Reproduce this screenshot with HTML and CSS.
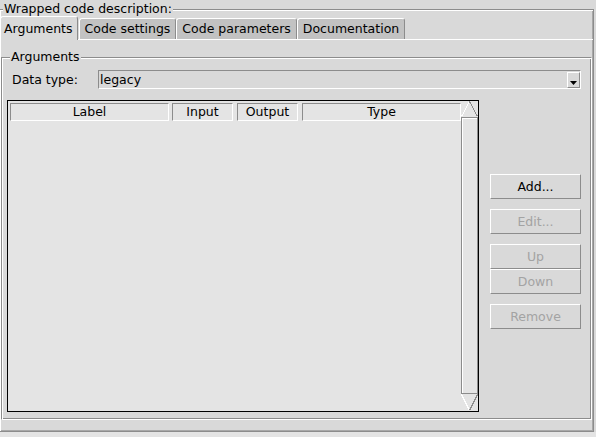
FILE: index.html
```html
<!DOCTYPE html>
<html>
<head>
<meta charset="utf-8">
<title>Wrapped code description</title>
<link rel="stylesheet" href="styles.css">
</head>
<body>
<fieldset class="group outer">
  <legend class="group-title">Wrapped code description:</legend>
  <div class="tabs">
    <div class="tab tab-active">Arguments</div>
    <div class="tab tab-first">Code settings</div>
    <div class="tab">Code parameters</div>
    <div class="tab">Documentation</div>
  </div>
  <div class="panel">
    <fieldset class="group inner">
      <legend class="group-title">Arguments</legend>
      <div class="type-row">
        <span class="type-label">Data type:</span>
        <div class="combo">
          <span class="combo-value">legacy</span>
          <span class="combo-btn"><svg width="7" height="4" viewBox="0 0 7 4"><polygon points="0,0 7,0 3.5,4" fill="#000"/></svg></span>
        </div>
      </div>
      <div class="main">
        <div class="table">
          <div class="grid">
            <div class="header">
              <div class="th c-label">Label</div>
              <div class="th c-input">Input</div>
              <div class="th c-output">Output</div>
              <div class="th c-type">Type</div>
            </div>
          </div>
          <div class="vscroll">
            <svg class="arrow" width="17" height="16" viewBox="0 0 17 16" shape-rendering="crispEdges">
              <line x1="0.5" y1="15.5" x2="8.5" y2="0.5" stroke="#ffffff" stroke-width="1"/>
              <line x1="8.5" y1="0.5" x2="16.5" y2="15.5" stroke="#8c8c8c" stroke-width="1"/>
            </svg>
            <div class="thumb"></div>
            <svg class="arrow" width="17" height="17" viewBox="0 0 17 17" shape-rendering="crispEdges">
              <line x1="0.5" y1="0.5" x2="8.5" y2="16.5" stroke="#ffffff" stroke-width="1"/>
              <line x1="16.5" y1="0.5" x2="8.5" y2="16.5" stroke="#8c8c8c" stroke-width="1"/>
            </svg>
          </div>
        </div>
        <div class="buttons">
          <div class="btn">Add...</div>
          <div class="btn btn-disabled btn-spaced">Edit...</div>
          <div class="btn btn-disabled btn-spaced">Up</div>
          <div class="btn btn-disabled">Down</div>
          <div class="btn btn-disabled btn-spaced">Remove</div>
        </div>
      </div>
    </fieldset>
  </div>
</fieldset>
<div class="status"></div>
</body>
</html>
```

FILE: styles.css
```css
html, body {
  margin: 0;
  padding: 0;
}

body {
  width: 596px;
  height: 437px;
  overflow: hidden;
  background: #d9d9d9;
  font-family: "DejaVu Sans", sans-serif;
  font-size: 12.5px;
  color: #000;
}

.group {
  margin: 0;
  padding: 0;
  min-width: 0;
  box-sizing: border-box;
  border: 1px solid #8c8c8c;
}

.group-title {
  margin-left: 3px;
  padding: 0 1px 2px;
  line-height: 9px;
  background: #d9d9d9;
  white-space: nowrap;
}

.outer {
  margin: 4px 0 0 -1px;
  width: 595px;
  border-color: #8c8c8c;
  box-shadow: inset 1px 1px 0 #fff, inset -1px -1px 0 #a8a8a8;
}

.tabs {
  display: flex;
  align-items: flex-end;
  height: 23px;
  margin-top: 1px;
}

.tab {
  box-sizing: border-box;
  height: 21px;
  padding: 2px 5px 0 5px;
  line-height: 15px;
  background: #c2c2c2;
  border-top: 1px solid #fff;
  border-left: 1px solid #fff;
  border-right: 1px solid #8c8c8c;
  border-radius: 3px 3px 0 0;
  white-space: nowrap;
}

.tab-first {
  margin-left: 1px;
}

.tab-active {
  position: relative;
  z-index: 1;
  height: 24px;
  padding: 4px 4px 0 3px;
  margin-bottom: -1px;
  background: #d9d9d9;
}

.panel {
  border-top: 1px solid #fff;
  padding: 12px 1px 11px;
}

.inner {
  border-color: #8c8c8c #fff #fff #8c8c8c;
  box-shadow: inset 1px 1px 0 #fff, inset -1px -1px 0 #8c8c8c;
  padding: 0 10px 7px 5px;
}

.type-row {
  display: flex;
  align-items: center;
  height: 19px;
  margin-top: 7px;
}

.type-label {
  width: 86px;
  padding-left: 5px;
  line-height: 17px;
}

.combo {
  display: flex;
  box-sizing: border-box;
  width: 483px;
  height: 19px;
  border: 1px solid;
  border-color: #8c8c8c #fff #fff #8c8c8c;
}

.combo-value {
  padding-left: 1px;
  line-height: 17px;
}

.combo-btn {
  margin-left: auto;
  align-self: flex-end;
  box-sizing: border-box;
  width: 13px;
  height: 16px;
  padding-bottom: 2px;
  border: 1px solid;
  border-color: #fff #8c8c8c #8c8c8c #fff;
  display: flex;
  align-items: flex-end;
  justify-content: center;
}

.combo-btn svg {
  display: block;
}

.main {
  display: flex;
  align-items: flex-start;
  margin-top: 11px;
}

.table {
  display: flex;
  box-sizing: border-box;
  width: 472px;
  height: 312px;
  border: 1px solid #000;
  background: #e4e4e4;
}

.grid {
  flex: 1;
  padding: 2px 0 0 2px;
}

.header {
  display: flex;
}

.th {
  box-sizing: border-box;
  height: 18px;
  line-height: 16px;
  text-align: center;
  border: 1px solid;
  border-color: #8c8c8c #fff #fff #8c8c8c;
  white-space: nowrap;
}

.c-label { width: 159px; }
.c-input { width: 61px; margin-left: 3px; }
.c-output { width: 61px; margin-left: 4px; }
.c-type { width: 159px; margin-left: 4px; }

.vscroll {
  width: 17px;
  display: flex;
  flex-direction: column;
}

.arrow {
  display: block;
  flex: none;
}

.thumb {
  flex: 1;
  box-sizing: border-box;
  border: 1px solid #8c8c8c;
  box-shadow: inset 1px 1px 0 #fff;
}

.buttons {
  width: 91px;
  margin-left: 11px;
  margin-top: 74px;
  display: flex;
  flex-direction: column;
}

.btn {
  box-sizing: border-box;
  height: 25px;
  line-height: 23px;
  text-align: center;
  border: 1px solid;
  border-color: #fff #8c8c8c #8c8c8c #fff;
}

.btn-disabled {
  color: #a3a3a3;
}

.btn-spaced {
  margin-top: 10px;
}

.status {
  height: 5px;
  background: #e4e4e4;
}
```
